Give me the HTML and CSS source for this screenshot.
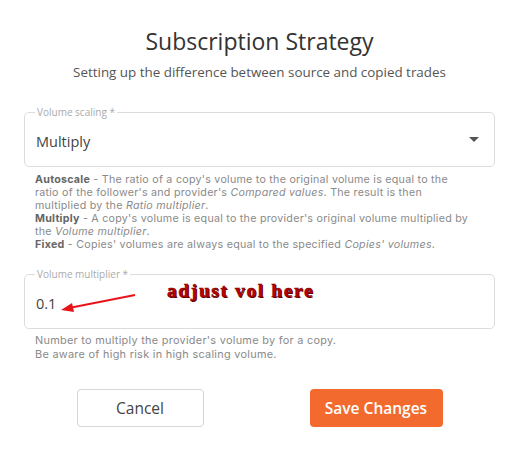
FILE: index.html
```html
<!DOCTYPE html>
<html>
<head>
<meta charset="utf-8">
<link rel="stylesheet" href="styles.css">
</head>
<body>
<div class="modal">
  <h1 class="title">Subscription Strategy</h1>
  <p class="subtitle">Setting up the difference between source and copied trades</p>

  <fieldset class="field">
    <legend class="field-label">Volume scaling *</legend>
    <div class="field-row">
      <span class="field-value">Multiply</span>
      <span class="caret"></span>
    </div>
  </fieldset>
  <p class="help">
    <b>Autoscale</b> - The ratio of a copy's volume to the original volume is equal to the<br>
    ratio of the follower's and provider's <i>Compared values</i>. The result is then<br>
    multiplied by the <i>Ratio multiplier</i>.<br>
    <b>Multiply</b> - A copy's volume is equal to the provider's original volume multiplied by<br>
    the <i>Volume multiplier</i>.<br>
    <b>Fixed</b> - Copies' volumes are always equal to the specified <i>Copies' volumes</i>.
  </p>

  <fieldset class="field field-multiplier">
    <legend class="field-label">Volume multiplier *</legend>
    <div class="field-row">
      <span class="field-value">0.1</span>
    </div>
    <svg class="arrow" width="80" height="20" viewBox="0 0 80 20">
      <line x1="76" y1="2" x2="10" y2="15" stroke="#e8141a" stroke-width="2"/>
      <polygon points="2,17 13,10 15,19" fill="#e8141a"/>
    </svg>
    <span class="note">adjust vol here</span>
  </fieldset>
  <p class="help help-2">
    Number to multiply the provider's volume by for a copy.<br>
    Be aware of high risk in high scaling volume.
  </p>

  <div class="actions">
    <button class="btn btn-cancel">Cancel</button>
    <button class="btn btn-save">Save Changes</button>
  </div>
</div>
</body>
</html>
```

FILE: styles.css
```css
html, body {
  margin: 0;
  padding: 0;
  background: #fff;
}

body {
  font-family: "Open Sans", "Noto Sans", sans-serif;
  color: #333;
}

.modal {
  width: 519px;
  height: 451px;
  box-sizing: border-box;
  padding: 26px 24px 0 24px;
  display: flex;
  flex-direction: column;
}

.title {
  margin: 0;
  font-size: 23px;
  line-height: 30px;
  font-weight: 400;
  text-align: center;
  color: #333;
}

.subtitle {
  margin: 8px 0 0 0;
  font-size: 13.4px;
  line-height: 16px;
  text-align: center;
  color: #555;
}

.field {
  margin: 26px 0 0 0;
  padding: 0 11px;
  border: 1px solid #dcdcdc;
  border-radius: 5px;
  height: 61px;
  box-sizing: border-box;
  position: relative;
}

.field-label {
  font-size: 10px;
  line-height: 12px;
  color: #aaa;
  padding: 0 2px;
  margin-left: -1px;
}

.field-row {
  display: flex;
  align-items: center;
  justify-content: space-between;
  height: 40px;
  padding-top: 6px;
  box-sizing: border-box;
}

.field-value {
  font-size: 14.5px;
  color: #444;
}

.caret {
  width: 0;
  height: 0;
  border-left: 5px solid transparent;
  border-right: 5px solid transparent;
  border-top: 5px solid #555;
  margin-right: 4px;
  margin-top: -3px;
}

.help {
  margin: 6px 0 0 11px;
  font-family: Inter, "Open Sans", sans-serif;
  font-size: 10.7px;
  line-height: 13px;
  letter-spacing: 0.25px;
  color: #8a8a8a;
}

.help b {
  color: #666;
  font-weight: 700;
}

.help i {
  font-style: italic;
}

.field-multiplier {
  margin-top: 17px;
}

.arrow {
  position: absolute;
  left: 34px;
  top: 13px;
}

.note {
  position: absolute;
  left: 142px;
  top: 0;
  font-family: "Liberation Serif", serif;
  font-weight: 700;
  font-size: 19.5px;
  letter-spacing: 1.6px;
  color: #c00000;
  -webkit-text-stroke: 0.5px #7a0000;
  text-shadow: 1px 1px 0 #5a0000;
}

.help-2 {
  margin-top: 4px;
  font-size: 10.9px;
  line-height: 14px;
  letter-spacing: 0.28px;
}

.actions {
  display: flex;
  justify-content: center;
  gap: 106px;
  margin-top: 28px;
}

.btn {
  height: 38px;
  border-radius: 4px;
  font-family: "Open Sans", "Noto Sans", sans-serif;
  font-size: 15.5px;
  cursor: pointer;
}

.btn-cancel {
  width: 127px;
  background: #fff;
  border: 1px solid #d6d6d6;
  color: #444;
}

.btn-save {
  width: 133px;
  background: #f26a2d;
  border: none;
  color: #fff;
  font-weight: 600;
}
```
